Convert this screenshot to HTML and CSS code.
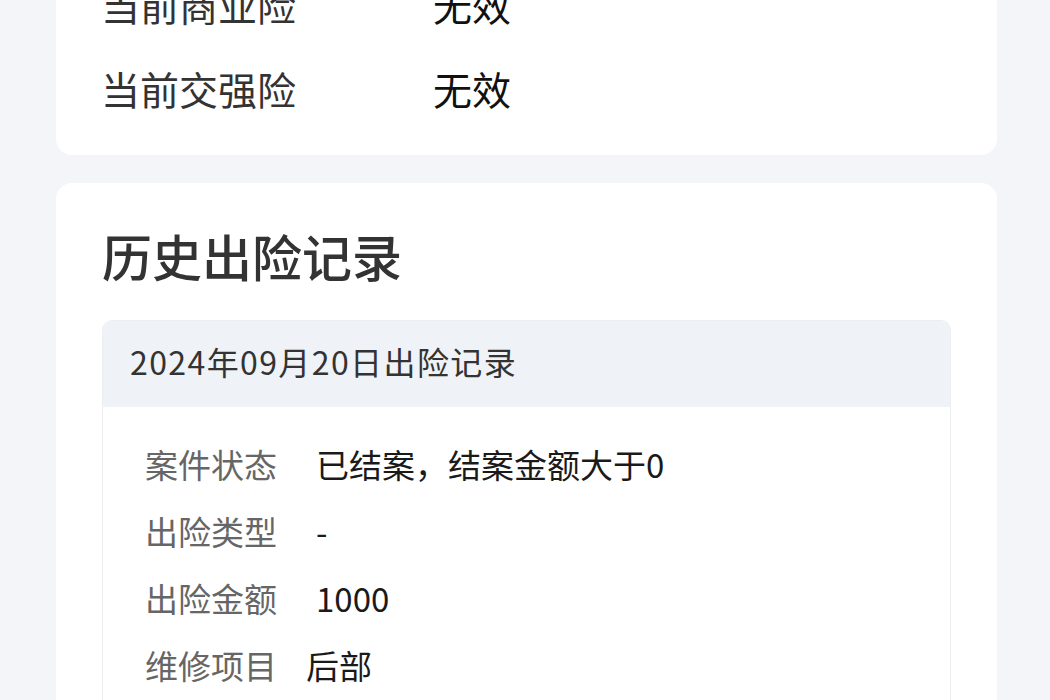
FILE: index.html
```html
<!DOCTYPE html>
<html lang="zh">
<head>
  <meta charset="UTF-8">
  <title>车辆出险记录</title>
  <meta name="viewport" content="width=device-width, initial-scale=1.0">
  <link rel="stylesheet" href="styles.css">
</head>
<body>
  <div class="page">
    <div class="card insurance">
      <div class="info-row">
        <span class="info-label">当前商业险</span>
        <span class="info-value">无效</span>
      </div>
      <div class="info-row">
        <span class="info-label">当前交强险</span>
        <span class="info-value">无效</span>
      </div>
    </div>

    <div class="card history">
      <h2 class="card-title">历史出险记录</h2>

      <div class="record">
        <div class="record-head">2024年09月20日出险记录</div>
        <div class="record-body">
          <div class="record-row">
            <span class="record-label">案件状态</span>
            <span class="record-value">已结案，结案金额大于0</span>
          </div>
          <div class="record-row">
            <span class="record-label">出险类型</span>
            <span class="record-value">-</span>
          </div>
          <div class="record-row">
            <span class="record-label">出险金额</span>
            <span class="record-value">1000</span>
          </div>
          <div class="record-row">
            <span class="record-label">维修项目</span>
            <span class="record-value record-value-tight">后部</span>
          </div>
        </div>
      </div>
    </div>
  </div>
</body>
</html>
```

FILE: styles.css
```css
body {
  margin: 0;
  background: #f4f5f8;
  font-family: "Noto Sans CJK SC", "Noto Sans", sans-serif;
  color: #222;
}
.page { margin: -64px 53px 0 56px; display: flex; flex-direction: column; gap: 28px; }

.card { background: #fff; border-radius: 16px; padding: 40px 46px 39px; }
.insurance { padding-left: 45px; }

.info-row { display: flex; font-size: 39px; line-height: 56px; }
.info-row + .info-row { margin-top: 28px; }
.info-label { width: 332px; color: #333; }
.info-value { color: #111; }

.history { padding-top: 37px; }
.card-title { margin: 0 0 30px; font-size: 50px; line-height: 70px; font-weight: 500; color: #333; }

.record { border: 1px solid #eceef1; border-radius: 10px 10px 0 0; overflow: hidden; }
.record-head {
  background: #eff2f6; padding: 19px 27px 24px;
  font-size: 32px; line-height: 43px; letter-spacing: 1.4px; color: #333;
}
.record-body { padding: 34px 42px 30px; display: flex; flex-direction: column; gap: 21px; }
.record-row { display: flex; font-size: 33px; line-height: 46px; }
.record-label { width: 171px; flex-shrink: 0; color: #666; }
.record-value { color: #1a1a1a; }
.record-value-tight { margin-left: -10px; }
```
